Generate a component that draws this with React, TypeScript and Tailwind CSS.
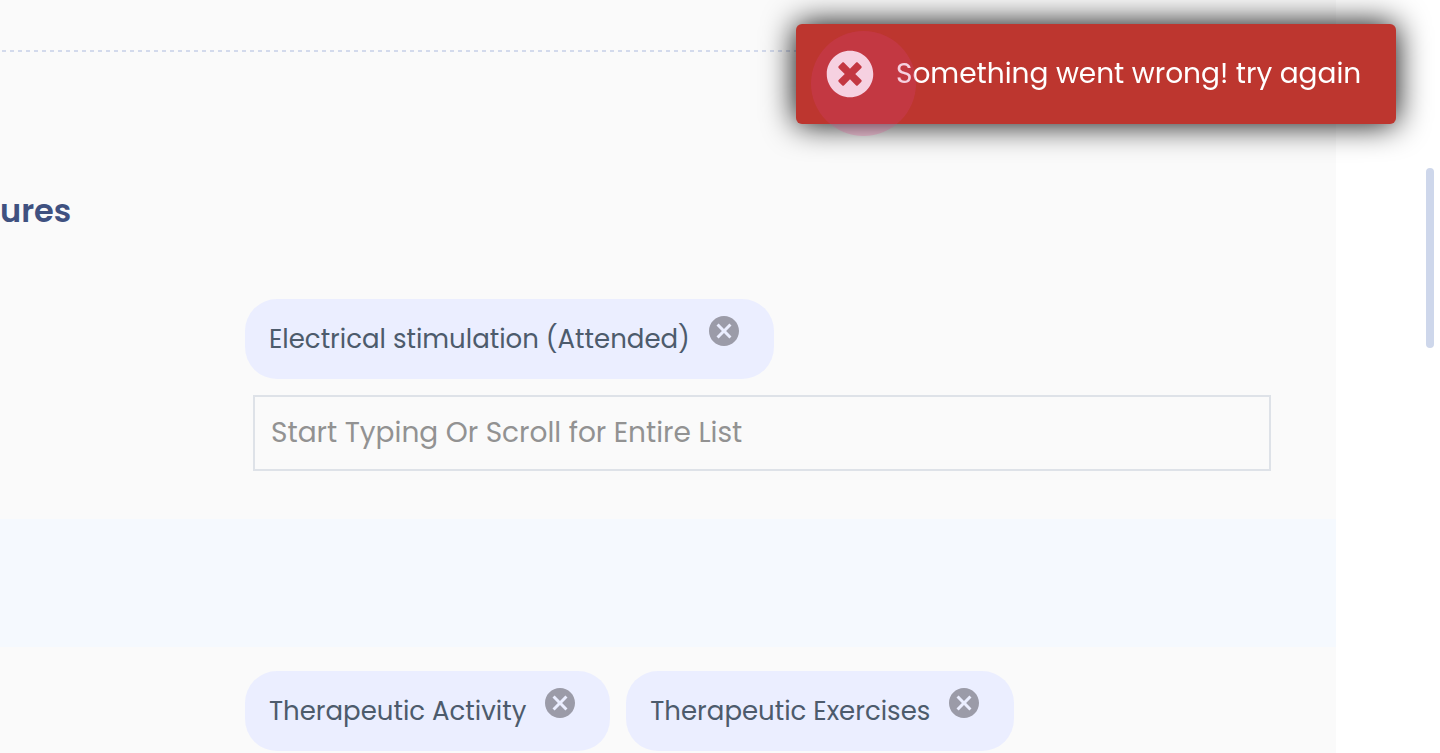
import React from "react";
import { FaTimesCircle } from "react-icons/fa";
import { MdCancel } from "react-icons/md";

const modalities = ["Electrical stimulation (Attended)"];
const exercises = ["Therapeutic Activity", "Therapeutic Exercises"];

type ChipProps = {
  label: string;
};

const Chip = ({ label }: ChipProps) => {
  return (
    <li className="flex h-20 items-center rounded-[32px] bg-[#ebeeff] pr-8 pl-6">
      <span className="text-[26px] leading-10 text-[#4d5b6c]">{label}</span>
      <button type="button" aria-label={`Remove ${label}`} className="mb-4 ml-4 text-[#9b9ba8]">
        <MdCancel size={36} />
      </button>
    </li>
  );
};

const ChipList = ({ items }: { items: string[] }) => {
  return (
    <ul className="flex flex-wrap gap-4">
      {items.map((item) => (
        <Chip key={item} label={item} />
      ))}
    </ul>
  );
};

const Toast = () => {
  return (
    <div
      role="alert"
      className="fixed top-6 right-11 flex h-[100px] w-[600px] items-center rounded-md bg-[#bd362f] pr-8 pl-[30px] text-white shadow-[0_0_32px_#000]"
    >
      <FaTimesCircle size={48} className="shrink-0" />
      <p className="ml-[22px] text-[28px] leading-10 whitespace-nowrap">Something went wrong! try again</p>
      {/* Click ripple */}
      <span className="absolute top-[7px] left-[15px] h-[105px] w-[105px] rounded-full bg-[#da3e80]/24"></span>
    </div>
  );
};

const App = () => {
  return (
    <div className="flex min-h-screen bg-white font-['Poppins','Inter',sans-serif]">
      <main className="flex-1 bg-[#fafafa]">
        <section className="pt-[50px] pb-12">
          <div className="h-[2px] bg-[repeating-linear-gradient(90deg,transparent_0_2px,#d3daec_2px_6px,transparent_6px_8px)]"></div>
          <h2 className="mt-[139px] text-[32px] leading-10 font-semibold text-[#3f5180]">ures</h2>
          <div className="mt-[68px] pr-[65px] pl-[245px]">
            <ChipList items={modalities} />
            <div className="mt-4 pl-2">
              <input
                type="text"
                aria-label="Procedure"
                placeholder="Start Typing Or Scroll for Entire List"
                className="h-[76px] w-full border-2 border-[#dee2e8] bg-transparent px-4 text-[28px] text-[#4d5b6c] outline-none placeholder:text-[#929292]"
              />
            </div>
          </div>
        </section>

        <div className="h-32 bg-[#f5f9fe]"></div>

        <section className="pt-6 pr-[65px] pl-[245px]">
          <ChipList items={exercises} />
        </section>
      </main>

      {/* Scroll gutter */}
      <aside className="flex w-[104px] justify-end pt-[168px] pr-[6px]">
        <div className="h-[180px] w-2 rounded-full bg-[#ced7eb]"></div>
      </aside>

      <Toast />
    </div>
  );
};

export default App;
